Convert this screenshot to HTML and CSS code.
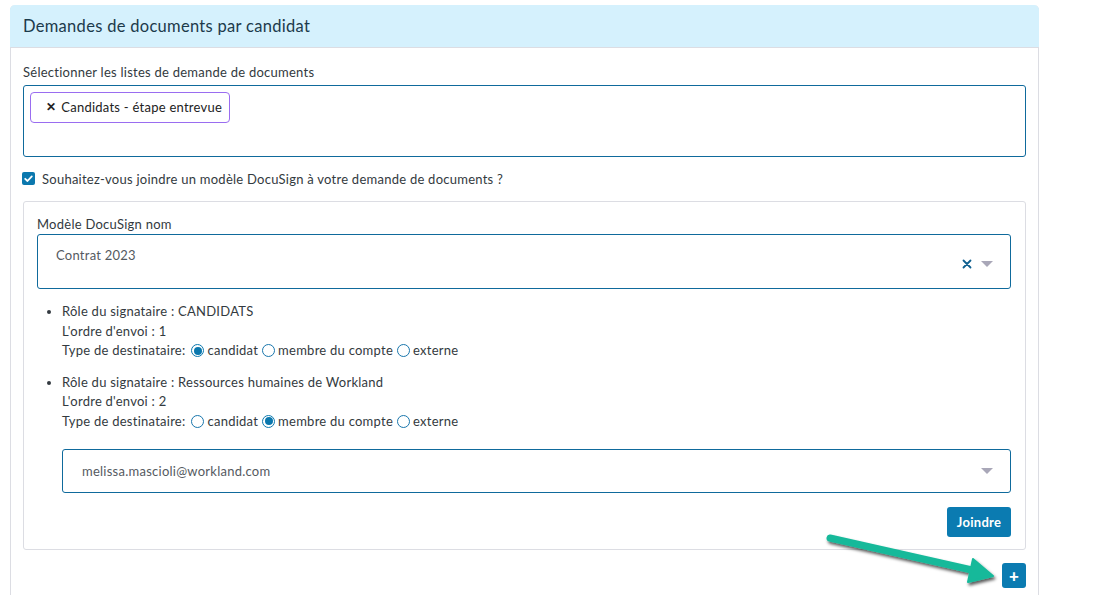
FILE: index.html
```html
<!DOCTYPE html>
<html lang="fr">
<head>
<meta charset="utf-8">
<title>Demandes de documents par candidat</title>
<link rel="stylesheet" href="styles.css">
</head>
<body>
<div class="card">
  <div class="card-header">Demandes de documents par candidat</div>
  <div class="card-body">
    <label class="field-label">Sélectionner les listes de demande de documents</label>
    <div class="multi">
      <span class="tag"><span class="tag-x">✕</span>Candidats - étape entrevue</span>
    </div>
    <div class="check-row">
      <span class="checkbox"><svg viewBox="0 0 13 13" width="13" height="13"><path d="M3.2 6.8 L5.5 9 L9.8 4.4" fill="none" stroke="#fff" stroke-width="1.8" stroke-linecap="round" stroke-linejoin="round"/></svg></span>
      <span>Souhaitez-vous joindre un modèle DocuSign à votre demande de documents ?</span>
    </div>
    <div class="panel">
      <label class="field-label field-label-tight">Modèle DocuSign nom</label>
      <div class="select select-tall">
        <span class="select-value">Contrat 2023</span>
        <span class="select-icons">
          <svg class="clear" viewBox="0 0 10 10" width="10" height="10"><path d="M1.5 1.5 L8.5 8.5 M8.5 1.5 L1.5 8.5" stroke="#0e5f8f" stroke-width="1.8" stroke-linecap="round"/></svg>
          <span class="caret"></span>
        </span>
      </div>
      <ul class="signers">
        <li>
          <div>Rôle du signataire : CANDIDATS</div>
          <div>L'ordre d'envoi : 1</div>
          <div class="radios">
            <span class="radios-label">Type de destinataire:</span>
            <span class="opt"><span class="radio checked"></span>candidat</span>
            <span class="opt"><span class="radio"></span>membre du compte</span>
            <span class="opt"><span class="radio"></span>externe</span>
          </div>
        </li>
        <li>
          <div>Rôle du signataire : Ressources humaines de Workland</div>
          <div>L'ordre d'envoi : 2</div>
          <div class="radios">
            <span class="radios-label">Type de destinataire:</span>
            <span class="opt"><span class="radio"></span>candidat</span>
            <span class="opt"><span class="radio checked"></span>membre du compte</span>
            <span class="opt"><span class="radio"></span>externe</span>
          </div>
        </li>
      </ul>
      <div class="select select-email">
        <span class="select-value">melissa.mascioli@workland.com</span>
        <span class="select-icons"><span class="caret"></span></span>
      </div>
      <div class="actions">
        <button class="btn">Joindre</button>
      </div>
    </div>
    <div class="add-row">
      <button class="btn btn-plus">+</button>
    </div>
  </div>
</div>
<svg class="arrow" viewBox="0 0 200 70" width="200" height="70">
  <defs>
    <filter id="sh" x="-20%" y="-50%" width="140%" height="200%">
      <feDropShadow dx="1.5" dy="2.5" stdDeviation="1.5" flood-color="#000" flood-opacity="0.65"/>
    </filter>
  </defs>
  <g filter="url(#sh)" fill="#15b99a" stroke="#15b99a">
    <line x1="13" y1="13" x2="155" y2="45" stroke-width="7" stroke-linecap="round"/>
    <polygon points="176,51 151,57 156,34" stroke-width="2" stroke-linejoin="round"/>
  </g>
</svg>
</body>
</html>
```
FILE: styles.css
```css
html, body {
  margin: 0;
  padding: 0;
  background: #fff;
}
body {
  font-family: Lato, "Open Sans", sans-serif;
  font-size: 13px;
  letter-spacing: 0.25px;
  color: #333a40;
  position: relative;
  height: 595px;
  overflow: hidden;
}
.card {
  margin: 5px 0 0 10px;
  width: 1029px;
  box-sizing: border-box;
  border: 1px solid #dcdde3;
  border-top: none;
  border-radius: 5px 5px 0 0;
  min-height: 592px;
}
.card-header {
  height: 43px;
  box-sizing: border-box;
  background: #d5f1fd;
  border-bottom: 1px solid #dcdde3;
  border-radius: 5px 5px 0 0;
  margin: 0 -1px;
  padding: 0 13px;
  display: flex;
  align-items: center;
  font-size: 16.5px;
  letter-spacing: 0.3px;
  color: #1c3a4b;
}
.card-body {
  padding: 16px 12px 0 12px;
}
.field-label {
  display: block;
  line-height: 17px;
  margin-bottom: 4px;
}
.field-label-tight {
  margin-bottom: 1px;
}
.multi {
  height: 72px;
  box-sizing: border-box;
  border: 1px solid #0f6a9c;
  border-radius: 3px;
  padding: 6px;
}
.tag {
  display: inline-flex;
  align-items: center;
  height: 31px;
  width: 200px;
  box-sizing: border-box;
  border: 1px solid #9a6df0;
  border-radius: 4px;
  padding: 0 0 2px 15px;
  color: #222;
}
.tag-x {
  font-weight: bold;
  font-size: 12px;
  margin-right: 5px;
}
.check-row {
  display: flex;
  align-items: center;
  margin-top: 14px;
  height: 15px;
}
.checkbox {
  width: 13px;
  height: 13px;
  background: #0b78ae;
  border-radius: 2px;
  margin: 0 7px 0 -1px;
  display: inline-flex;
}
.panel {
  margin-top: 15px;
  border: 1px solid #dcdde3;
  border-radius: 3px;
  padding: 14px 14px 12px 13px;
}
.select {
  position: relative;
  box-sizing: border-box;
  border: 1px solid #0f6a9c;
  border-radius: 3px;
  color: #555a5f;
  padding-left: 18px;
}
.select-tall {
  height: 55px;
  padding-top: 12px;
}
.select-email {
  height: 44px;
  margin-left: 25px;
  margin-top: 18px;
  display: flex;
  align-items: center;
  padding-left: 19px;
}
.select-icons {
  position: absolute;
  right: 17px;
  top: 50%;
  transform: translateY(-30%);
  display: flex;
  align-items: center;
  gap: 9px;
}
.select-email .select-icons {
  transform: translateY(-50%);
}
.caret {
  width: 0;
  height: 0;
  border-left: 6px solid transparent;
  border-right: 6px solid transparent;
  border-top: 6px solid #a9a7b8;
}
.signers {
  margin: 13px 0 0 0;
  padding-left: 25px;
  line-height: 19.5px;
}
.signers li + li {
  margin-top: 12px;
}
.radios {
  display: flex;
  align-items: center;
}
.opt {
  display: inline-flex;
  align-items: center;
  margin-left: 4px;
}
.radios-label + .opt {
  margin-left: 6px;
}
.radio {
  width: 13px;
  height: 13px;
  box-sizing: border-box;
  border: 1px solid #1976ac;
  border-radius: 50%;
  margin-right: 3px;
  position: relative;
}
.radio.checked {
  border-color: #0b78ae;
}
.radio.checked::after {
  content: "";
  position: absolute;
  left: 1.5px;
  top: 1.5px;
  width: 8px;
  height: 8px;
  border-radius: 50%;
  background: #0b78ae;
}
.actions {
  display: flex;
  justify-content: flex-end;
  margin-top: 14px;
}
.btn {
  font-family: inherit;
  letter-spacing: 0.3px;
  background: #0b7bb1;
  color: #fff;
  border: none;
  border-radius: 3px;
  font-weight: bold;
  font-size: 13px;
  height: 30px;
  width: 64px;
  padding: 0;
}
.add-row {
  display: flex;
  justify-content: flex-end;
  margin-top: 13px;
}
.btn-plus {
  width: 24px;
  height: 25px;
  font-size: 17px;
  font-weight: 900;
  line-height: 1;
}
.arrow {
  position: absolute;
  left: 817px;
  top: 525px;
}
```
